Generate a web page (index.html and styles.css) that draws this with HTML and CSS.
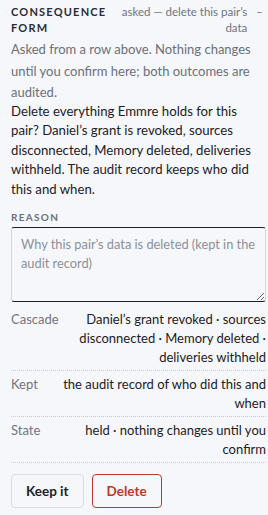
FILE: index.html
```html
<!DOCTYPE html>
<html>

<head>
    <title>Consequence form</title>
    <meta name="viewport" content="width=device-width, initial-scale=1">
    <link rel="stylesheet" href="styles.css">
</head>

<body>
    <div class="form">
        <div class="head">
            <h2>Consequence form</h2>
            <div class="asked">asked — delete this pair’s data</div>
            <div class="dash">–</div>
        </div>

        <p class="note">Asked from a row above. Nothing changes until you confirm here; both outcomes are audited.</p>
        <p class="question">Delete everything Emmre holds for this pair? Daniel’s grant is revoked, sources disconnected, Memory deleted, deliveries withheld. The audit record keeps who did this and when.</p>

        <label class="field-label" for="reason">Reason</label>
        <textarea id="reason" placeholder="Why this pair’s data is deleted (kept in the audit record)"></textarea>

        <div class="rows">
            <div class="row">
                <div class="key">Cascade</div>
                <div class="val">Daniel’s grant revoked · sources disconnected · Memory deleted · deliveries withheld</div>
            </div>
            <div class="row">
                <div class="key">Kept</div>
                <div class="val">the audit record of who did this and when</div>
            </div>
            <div class="row">
                <div class="key">State</div>
                <div class="val">held · nothing changes until you confirm</div>
            </div>
        </div>

        <div class="actions">
            <button class="btn">Keep it</button>
            <button class="btn btn-danger">Delete</button>
        </div>
    </div>
</body>

</html>
```

FILE: styles.css
```css
body {
    margin: 0;
    background: #f6f7fa;
    font-family: Lato, "Liberation Sans", sans-serif;
    color: #1d2025;
}

.form {
    padding: 4px 2px 8px 11px;
}

.head {
    display: flex;
    align-items: flex-start;
}

.head h2 {
    flex: 1;
    margin: 0;
    font-size: 11px;
    font-weight: 700;
    letter-spacing: 1.2px;
    text-transform: uppercase;
    line-height: 16px;
    color: #2a2d33;
}

.asked {
    flex: 0 0 127px;
    margin-left: 8px;
    text-align: right;
    font-size: 11.5px;
    line-height: 16px;
    color: #70757e;
}

.dash {
    flex: 0 0 6px;
    margin: 0 3px 0 9px;
    font-size: 11.5px;
    line-height: 16px;
    color: #70757e;
}

.note {
    margin: 3px 0 0;
    font-size: 13px;
    line-height: 21.5px;
    color: #6b7079;
}

.question {
    margin: -2px 0 0;
    font-size: 13.2px;
    line-height: 19.5px;
    color: #1d2025;
}

.field-label {
    display: block;
    margin-top: 11px;
    font-size: 10px;
    font-weight: 700;
    letter-spacing: 1.3px;
    line-height: 14px;
    text-transform: uppercase;
    color: #6b7079;
}

textarea {
    display: block;
    box-sizing: border-box;
    width: 100%;
    height: 75px;
    margin-top: 3px;
    padding: 7px 5px 7px 9px;
    border: 1px solid #d3d6dc;
    border-top-color: #1d2025;
    border-bottom-color: #1d2025;
    border-radius: 3px;
    background: #f6f7fa;
    font-family: inherit;
    font-size: 12.8px;
    line-height: 18.5px;
    color: #1d2025;
}

textarea::placeholder {
    color: #8b9098;
}

.rows {
    margin-top: 4px;
}

.row {
    display: flex;
    justify-content: space-between;
    gap: 16px;
    padding: 4px 0 3px;
    border-bottom: 1px dotted #c9ccd3;
    font-size: 13px;
    line-height: 19px;
}

.key {
    flex: none;
    color: #70757e;
}

.val {
    text-align: right;
}

.actions {
    display: flex;
    gap: 8px;
    margin-top: 11px;
}

.btn {
    height: 34px;
    padding: 0 14px;
    border: 1px solid #dadde3;
    border-radius: 4px;
    background: #f6f7fa;
    font-family: inherit;
    font-size: 13.5px;
    font-weight: 700;
    color: #1d2025;
}

.btn-danger {
    border-color: #b83a28;
    color: #b83a28;
}
```
